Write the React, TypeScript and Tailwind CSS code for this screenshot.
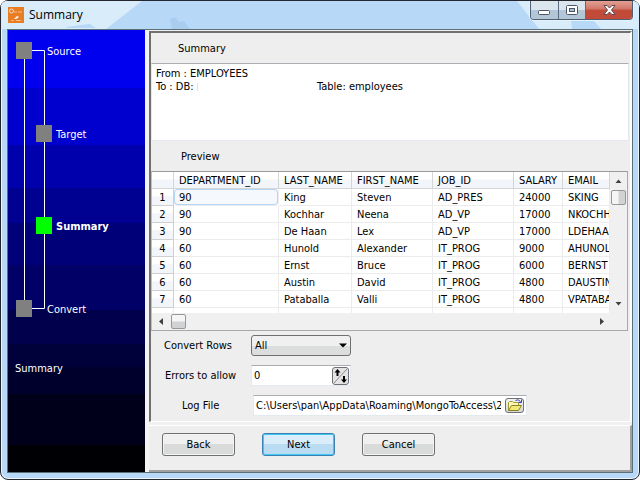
import { useState } from 'react';
import type { ReactNode } from 'react';

interface Employee {
  departmentId: number;
  lastName: string;
  firstName: string;
  jobId: string;
  salary: number;
  email: string;
}

const EMPLOYEES: Employee[] = [
  { departmentId: 90, lastName: 'King', firstName: 'Steven', jobId: 'AD_PRES', salary: 24000, email: 'SKING' },
  { departmentId: 90, lastName: 'Kochhar', firstName: 'Neena', jobId: 'AD_VP', salary: 17000, email: 'NKOCHHAR' },
  { departmentId: 90, lastName: 'De Haan', firstName: 'Lex', jobId: 'AD_VP', salary: 17000, email: 'LDEHAAN' },
  { departmentId: 60, lastName: 'Hunold', firstName: 'Alexander', jobId: 'IT_PROG', salary: 9000, email: 'AHUNOLD' },
  { departmentId: 60, lastName: 'Ernst', firstName: 'Bruce', jobId: 'IT_PROG', salary: 6000, email: 'BERNST' },
  { departmentId: 60, lastName: 'Austin', firstName: 'David', jobId: 'IT_PROG', salary: 4800, email: 'DAUSTIN' },
  { departmentId: 60, lastName: 'Pataballa', firstName: 'Valli', jobId: 'IT_PROG', salary: 4800, email: 'VPATABAL' },
];

const COLUMNS = ['DEPARTMENT_ID', 'LAST_NAME', 'FIRST_NAME', 'JOB_ID', 'SALARY', 'EMAIL'];

/** Title bar with the app icon, the window title and the caption buttons */
function TitleBar() {
  return (
    <header className="relative flex h-[28px] shrink-0 items-start justify-between overflow-hidden rounded-t-md bg-[#b7d9f7]">
      <svg className="absolute inset-0 h-full w-full" aria-hidden="true">
        <path d="M0 0H141L105 28H0Z" fill="#d8ecf9" />
        <path d="M66 26l14-2 9-1 6 4H65Z" fill="#b7d9f7" />
        <path d="M169 18l5-2 4 5 5-1 6 8h-18Z" fill="#a9cdee" />
      </svg>
      <svg className="absolute right-0 top-0 h-full w-[122px]" aria-hidden="true">
        <path d="M0 0h122v28H22Z" fill="#d8ecf9" />
        <path d="M54 19h22l8 9H55Z" fill="#b7d9f7" />
      </svg>
      <div className="relative flex items-center gap-[5px] pl-[7px] pt-[5px]">
        <svg width="16" height="16" viewBox="0 0 16 16" aria-hidden="true">
          <rect width="16" height="16" fill="#e87d24" />
          <circle cx="3.500" cy="4" r="2" fill="none" stroke="#fbdcc0" />
          <path d="M6 5h3M10 5h4M3 13.500h3M8 13.500h5" stroke="#f6bd8b" />
          <path d="M6 12l3-3 2 1-3 2Z" fill="#fff" />
        </svg>
        <h1 className="font-['Open_Sans',sans-serif] text-[12px] leading-[18px] text-black">Summary</h1>
      </div>
      <div className="relative mr-[6px] flex h-[19px] overflow-hidden rounded-b-[4px] border border-t-0 border-[#4f5f73] shadow-[0_0_0_1px_#e6f3fc]">
        <button
          type="button"
          aria-label="Minimize"
          className="flex w-[28px] items-center justify-center border-r border-[#5b6b80] bg-linear-to-b from-[#dbe5ee] from-50% to-[#b3c6d8] to-50%"
        >
          <svg width="13" height="14" viewBox="0 0 13 14">
            <rect x="0.5" y="7.5" width="11" height="4" rx="1" fill="#fff" stroke="#4d5665" />
          </svg>
        </button>
        <button
          type="button"
          aria-label="Maximize"
          className="flex w-[27px] items-center justify-center border-r border-[#5b6b80] bg-linear-to-b from-[#dbe5ee] from-50% to-[#b3c6d8] to-50%"
        >
          <svg width="12" height="11" viewBox="0 0 12 11">
            <rect x="0.5" y="0.5" width="11" height="9" rx="1" fill="#fff" stroke="#4d5665" />
            <rect x="3.5" y="3.5" width="5" height="3" fill="#a9bed3" stroke="#4d5665" />
          </svg>
        </button>
        <button
          type="button"
          aria-label="Close"
          className="flex w-[46px] items-center justify-center bg-linear-to-b from-[#e2a094] from-0% via-[#cf7668] via-45% to-[#c24a38] to-50%"
        >
          <svg width="13" height="11" viewBox="0 0 13 11">
            <path
              d="M1 .5h3L6.500 3 9 .5h3L8.500 5 12 9.500H9L6.500 7 4 9.500H1L4.500 5Z"
              fill="#fff"
              stroke="#5a4a55"
            />
          </svg>
        </button>
      </div>
    </header>
  );
}

interface StepProps {
  label: string;
  nested?: boolean;
  active?: boolean;
}

function Step({ label, nested, active }: StepProps) {
  return (
    <li className={`flex h-[17px] items-center ${nested ? 'ml-[28px] gap-1' : 'ml-[8px] gap-[15px]'}`}>
      <span className={`h-[17px] w-[16px] ${active ? 'bg-[#00ff00]' : 'bg-[#808080]'}`} />
      <span className={active ? 'pt-px font-bold' : 'pt-px'}>{label}</span>
    </li>
  );
}

/** Wizard steps on the banded blue background */
function Sidebar() {
  return (
    <nav
      aria-label="Wizard steps"
      className="w-[137px] shrink-0 bg-[linear-gradient(#0000ef_58px,#0000ce_58px_115px,#0000ad_115px_158px,#000091_158px_193px,#000078_193px_235px,#000066_235px_280px,#00004c_280px_314px,#00003a_314px_337px,#00002c_337px_364px,#00001a_364px_415px,#000004_415px)] text-white"
    >
      <div className="relative pt-[12px]">
        <svg className="absolute left-0 top-0" width="50" height="290" aria-hidden="true">
          <path d="M16.500 20V278M16.500 20.500H36.500V278.500H16.500" fill="none" stroke="#fff" />
        </svg>
        <ol className="relative">
          <Step label="Source" />
          <li className="h-[66px]" aria-hidden="true" />
          <Step label="Target" nested />
          <li className="h-[75px]" aria-hidden="true" />
          <Step label="Summary" nested active />
          <li className="h-[66px]" aria-hidden="true" />
          <Step label="Convert" />
        </ol>
      </div>
      <p className="pl-[7px] pt-[45px]">Summary</p>
    </nav>
  );
}

function PreviewTable() {
  return (
    <div className="mr-[2px] border border-t-[#9a9a9a] border-l-[#c0c0c0] border-r-[#a7a7ad] border-b-[#a7a7ad] bg-[#f0f0f0]">
      <div className="flex h-[141px]">
        <div className="min-w-0 flex-1 overflow-hidden bg-white">
          <table className="w-full table-fixed border-separate border-spacing-0 whitespace-nowrap">
            <colgroup>
              <col className="w-[22px]" />
              <col className="w-[105px]" />
              <col className="w-[73px]" />
              <col className="w-[81px]" />
              <col className="w-[81px]" />
              <col className="w-[49px]" />
              <col />
            </colgroup>
            <thead>
              <tr className="h-[17px] bg-linear-to-b from-white from-40% to-[#f2f5fa] to-50% text-left">
                <td className="border-r border-b border-[#d5d5d5] p-0" />
                {COLUMNS.map((name) => (
                  <th
                    key={name}
                    scope="col"
                    className="overflow-hidden border-r border-b border-[#d5d5d5] py-0 pl-[5px] pr-0 font-normal"
                  >
                    {name}
                  </th>
                ))}
              </tr>
            </thead>
            <tbody>
              {EMPLOYEES.map((row, i) => (
                <tr
                  key={row.email}
                  className="h-[17px] [&>td]:overflow-hidden [&>td]:border-r [&>td]:border-b [&>td]:border-[#ececec] [&>td]:py-0 [&>td]:pl-[5px] [&>td]:pr-0"
                >
                  <th
                    scope="row"
                    className="border-r border-b border-[#cfcfcf] bg-linear-to-b from-white from-40% to-[#f2f5fa] to-50% p-0 text-center font-normal"
                  >
                    {i + 1}
                  </th>
                  <td className={i === 0 ? 'rounded-sm bg-[#f5f8fc] shadow-[inset_0_0_0_1px_#b5d6f2]' : ''}>
                    {row.departmentId}
                  </td>
                  <td>{row.lastName}</td>
                  <td>{row.firstName}</td>
                  <td>{row.jobId}</td>
                  <td>{row.salary}</td>
                  <td>{row.email}</td>
                </tr>
              ))}
              <tr className="h-[17px] [&>td]:border-r [&>td]:border-[#ececec]">
                <td /><td /><td /><td /><td /><td /><td />
              </tr>
            </tbody>
          </table>
        </div>
        <div className="flex w-[17px] flex-col items-center justify-between" aria-hidden="true">
          <div className="flex flex-col items-center">
            <svg width="15" height="18" viewBox="0 0 15 18">
              <path d="M4.500 11L7.500 7.500 10.500 11Z" fill="#404040" />
            </svg>
            <div className="h-[15px] w-[15px] rounded-xs border border-[#979797] bg-linear-to-r from-[#f5f5f5] from-45% to-[#d0d2d4] to-55%" />
          </div>
          <svg width="15" height="18" viewBox="0 0 15 18">
            <path d="M4.500 7L7.500 10.500 10.500 7Z" fill="#404040" />
          </svg>
        </div>
      </div>
      <div className="flex h-[17px] items-center pr-[17px]" aria-hidden="true">
        <svg width="19" height="17" viewBox="0 0 19 17">
          <path d="M11 5L7 8.500 11 12Z" fill="#404040" />
        </svg>
        <div className="h-[15px] w-[15px] rounded-xs border border-[#979797] bg-linear-to-b from-[#f5f5f5] from-45% to-[#d0d2d4] to-55%" />
        <svg className="ml-auto" width="18" height="17" viewBox="0 0 18 17">
          <path d="M8 5L12 8.500 8 12Z" fill="#404040" />
        </svg>
      </div>
    </div>
  );
}

function ConvertOptions() {
  const [rows, setRows] = useState('All');
  const [errors, setErrors] = useState('0');
  const [logFile, setLogFile] = useState('C:\\Users\\pan\\AppData\\Roaming\\MongoToAccess\\2');

  return (
    <div className="flex-1 pt-1">
      <div className="flex items-center">
        <label htmlFor="rows" className="w-[100px] pl-[13px]">Convert Rows</label>
        <div className="relative w-[100px]">
          <select
            id="rows"
            value={rows}
            onChange={(e) => setRows(e.target.value)}
            className="block h-[21px] w-full appearance-none rounded-[3px] border border-[#707070] bg-linear-to-b from-[#f0f0f0] from-50% to-[#dcdddd] to-50% pl-[3px] pr-5"
          >
            <option>All</option>
            <option>Custom</option>
          </select>
          <svg className="pointer-events-none absolute right-1 top-2" width="8" height="5" viewBox="0 0 8 5">
            <path d="M0 .5H8L4 4.500Z" fill="#000" />
          </svg>
        </div>
      </div>
      <div className="mt-[9px] flex items-center">
        <label htmlFor="errors" className="w-[100px] pl-[14px]">Errors to allow</label>
        <div className="flex h-[21px] w-[100px] items-center border border-[#e3e9ef] border-t-[#abadb3] bg-white pr-px">
          <input
            id="errors"
            value={errors}
            onChange={(e) => setErrors(e.target.value)}
            className="h-full min-w-0 flex-1 bg-transparent px-[2px] outline-none"
          />
          <button
            type="button"
            aria-label="Change value"
            className="flex h-[18px] w-[17px] items-center justify-center rounded-[3px] border border-[#707070] bg-[#e4e4e4]"
          >
            <svg width="15" height="16" viewBox="0 0 15 16">
              <path d="M1 15L14 1" stroke="#8a8a8a" />
              <path d="M4.500 1L7.500 4.500H5.500V8H3.500V4.500H1.500Z" fill="#000" />
              <path d="M11 15L14 11.500H12V8H10V11.500H8Z" fill="#000" />
            </svg>
          </button>
        </div>
      </div>
      <div className="mt-[9px] flex items-center">
        <label htmlFor="log" className="w-[102px] pl-[31px]">Log File</label>
        <div className="flex h-[21px] w-[274px] items-center border border-[#e3e9ef] border-t-[#abadb3] bg-white pr-[2px]">
          <input
            id="log"
            value={logFile}
            onChange={(e) => setLogFile(e.target.value)}
            className="mr-1 h-full min-w-0 flex-1 bg-transparent pl-[2px] outline-none"
          />
          <button
            type="button"
            aria-label="Browse"
            className="flex h-[15px] w-[19px] items-center justify-center rounded-[3px] border border-[#707070] bg-linear-to-b from-[#f2f2f2] to-[#d6d8d8]"
          >
            <svg width="16" height="13" viewBox="0 0 16 13">
              <path d="M1.500 11.500V3.500L2.500 2.500H5.500L6.500 3.500H11.500V6" fill="#fdf8b8" stroke="#a09a30" />
              <path d="M1.500 11.500L4.500 6.500H14.500L11.500 11.500Z" fill="#f0e878" stroke="#8a8420" />
              <path d="M8.500 1.500Q11 -.5 13.500 2.500M14.500 .5V3.500H11.500" fill="none" stroke="#3c3cc8" />
            </svg>
          </button>
        </div>
      </div>
    </div>
  );
}

interface WizardButtonProps {
  primary?: boolean;
  children: ReactNode;
}

function WizardButton({ primary, children }: WizardButtonProps) {
  return (
    <button
      type="button"
      className={`h-[23px] w-[73px] rounded-[3px] border ${
        primary
          ? 'border-[#3c7fb1] bg-linear-to-b from-[#d9eefa] from-50% to-[#b9dcf2] to-50% shadow-[inset_0_0_0_1px_#3fc8f4]'
          : 'border-[#707070] bg-linear-to-b from-[#f0f0f0] from-50% to-[#d9dbdb] to-50% shadow-[inset_0_0_0_1px_#f4f4f4]'
      }`}
    >
      {children}
    </button>
  );
}

export default function App() {
  return (
    <div className="flex min-h-screen flex-col bg-white font-['DejaVu_Sans_Condensed','DejaVu_Sans',sans-serif] text-[11px] leading-[13px] text-black">
      <div className="flex flex-1 flex-col rounded-lg border border-[#25272e] bg-[#b7d9f7] shadow-[inset_0_0_0_1px_#e8f5fd]">
        <TitleBar />
        <div className="mx-[6px] mb-[6px] flex flex-1 border border-[#5b6f78] bg-[#f0f0f0]">
          <Sidebar />
          <main className="flex min-w-0 flex-1 flex-col border-l-4 border-[#f4f4f4] pt-px">
            <section className="flex flex-1 flex-col border-t-2 border-l-2 border-r-2 border-b border-t-[#707070] border-l-[#707070] border-r-white border-b-white bg-[#eeeeee]">
              <h2 className="flex h-[30px] items-center pl-[27px]">Summary</h2>
              <div className="mr-px flex h-[78px] border border-[#e3e9ef] border-t-[#abadb3] bg-white pl-1 pt-[3px]">
                <div className="w-[161px]">
                  <p>From : EMPLOYEES</p>
                  <p className="flex items-center gap-[3px]">
                    To : DB: <span className="h-[8px] w-px bg-[#ffdf9a]" />
                  </p>
                </div>
                <p className="pt-[13px]">Table: employees</p>
              </div>
              <h2 className="flex h-[30px] items-center pl-[30px]">Preview</h2>
              <PreviewTable />
              <ConvertOptions />
            </section>
            <footer className="mt-[3px] flex gap-[27px] border-t border-r-2 border-b-2 border-t-white border-r-[#a0a0a0] border-b-[#a0a0a0] bg-[#eeeeee] pt-[7px] pb-[14px] pl-[13px]">
              <WizardButton>Back</WizardButton>
              <WizardButton primary>Next</WizardButton>
              <WizardButton>Cancel</WizardButton>
            </footer>
          </main>
        </div>
      </div>
    </div>
  );
}
